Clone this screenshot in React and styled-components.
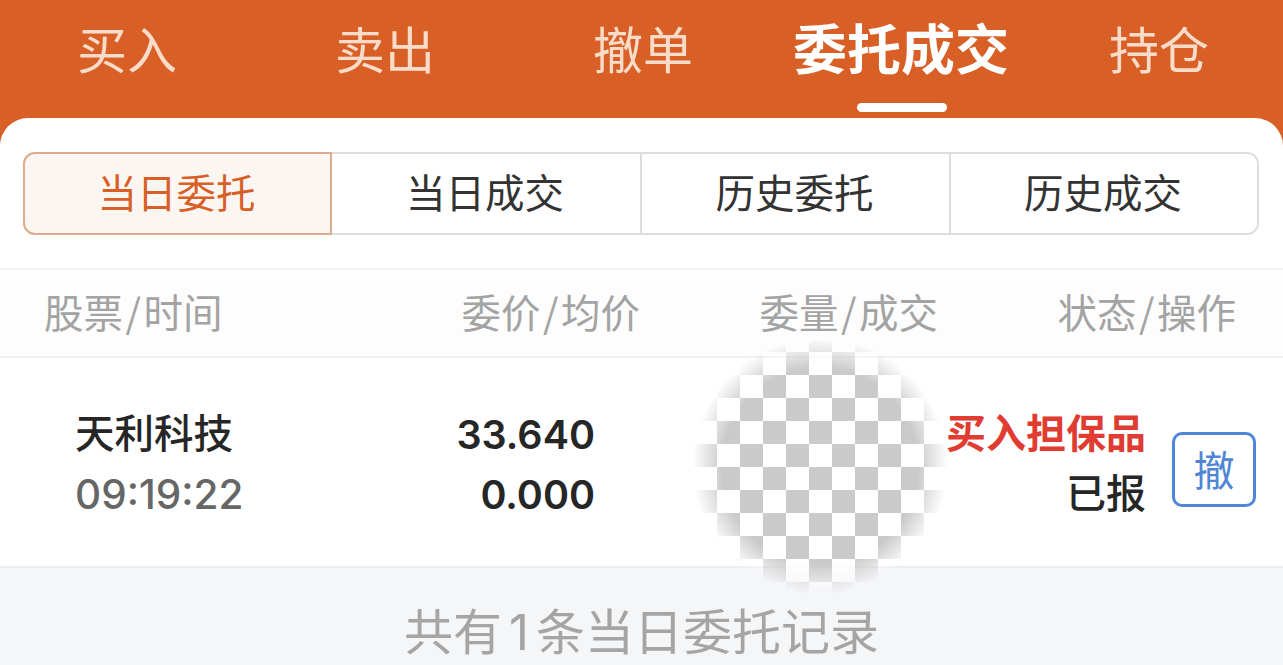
import React from 'react';
import styled, {createGlobalStyle} from 'styled-components';

const GlobalStyle = createGlobalStyle`
    html, body{
        margin: 0;
        padding: 0;
        background: #ffffff;
    }
    body{
        font-family: "Noto Sans CJK SC", "Liberation Sans", sans-serif;
        overflow: hidden;
    }
`;

const Page = styled.div`
    width: 1283px;
    height: 665px;
    overflow: hidden;
    background: #d86027;
`;

const TopTabs = styled.div`
    display: grid;
    grid-template-columns: repeat(5, 258px);
    margin-left: -2px;
    height: 118px;
`;

const TopTab = styled.div`
    position: relative;
    text-align: center;
    height: 100px;
    line-height: 94px;
    color: ${p => p.$active ? '#ffffff' : '#f8dcc9'};
    font-size: ${p => p.$active ? '54px' : '50px'};
    font-weight: ${p => p.$active ? 700 : 400};
    &::after{
        content: "";
        display: ${p => p.$active ? 'block' : 'none'};
        position: absolute;
        left: 85px;
        top: 103px;
        width: 90px;
        height: 9px;
        border-radius: 5px;
        background: #ffffff;
    }
`;

const Panel = styled.div`
    background: #ffffff;
    border-radius: 28px 28px 0 0;
    height: 547px;
    padding-top: 34px;
    box-sizing: border-box;
`;

const Segments = styled.div`
    display: grid;
    grid-template-columns: 307px 308px 309px 1fr;
    margin: 0 24px 0 23px;
    height: 83px;
    box-sizing: border-box;
    border: 2px solid #dddddd;
    border-radius: 12px;
`;

const Segment = styled.div`
    margin: ${p => p.$active ? '-2px 0 -2px -2px' : '0'};
    padding-right: 2px;
    text-align: center;
    line-height: 73px;
    font-size: 39.5px;
    color: ${p => p.$active ? '#d86027' : '#333333'};
    background: ${p => p.$active ? '#fcf6f2' : '#ffffff'};
    border: ${p => p.$active ? '2px solid #e0ab8d' : 'none'};
    border-left: ${p => p.$active || p.$first ? '' : '2px solid #dddddd'};
    border-radius: ${p => p.$active ? '12px 0 0 12px' : '0'};
    border-top-right-radius: ${p => p.$last ? '10px' : ''};
    border-bottom-right-radius: ${p => p.$last ? '10px' : ''};
`;

const Table = styled.div`
    position: relative;
    margin-top: 33px;
`;

const HeadRow = styled.div`
    display: grid;
    grid-template-columns: 178px 418px 298px 298px;
    padding-left: 44px;
    height: 90px;
    box-sizing: border-box;
    border-top: 2px solid #f2f2f2;
    border-bottom: 2px solid #f0f0f0;
    background: #fdfdfd;
`;

const HeadCell = styled.div`
    text-align: ${p => p.$left ? 'left' : 'right'};
    font-size: 39.5px;
    line-height: 81px;
    color: #a3a3a3;
    white-space: nowrap;
    span{
        margin: 0 2.5px;
    }
`;

const OrderRow = styled.div`
    display: flex;
    align-items: center;
    height: 210px;
    box-sizing: border-box;
    padding: 0 27px 0 75px;
    border-bottom: 2px solid #eeeeee;
`;

const NameCell = styled.div`
    width: 225px;
`;

const PriceCell = styled.div`
    width: 295px;
    text-align: right;
`;

const Line = styled.div`
    height: 60px;
    line-height: ${p => p.$num ? '66px' : '58px'};
    white-space: nowrap;
    font-size: ${p => p.$num ? p.$size || '40px' : p.$size || '40px'};
    font-family: ${p => p.$num ? 'Inter, "Liberation Sans", sans-serif' : 'inherit'};
    font-weight: ${p => p.$weight || 500};
    color: ${p => p.$color || '#262626'};
`;

const StatusCell = styled.div`
    flex: 1;
    text-align: right;
`;

const CancelButton = styled.div`
    width: 84px;
    height: 75px;
    margin: 15px 0 0 26px;
    box-sizing: border-box;
    border: 3px solid #4f86d6;
    border-radius: 10px;
    color: #4f86d6;
    font-size: 41px;
    line-height: 67px;
    text-align: center;
`;

const Mosaic = styled.div`
    position: absolute;
    left: 694px;
    top: 72px;
    width: 256px;
    height: 256px;
    background-color: #ffffff;
    background-image: repeating-conic-gradient(#cacaca 0 25%, #ffffff 0 50%);
    background-size: 46px 46px;
    background-position: 0px -11px;
    filter: blur(0.6px);
    -webkit-mask-image: radial-gradient(circle at 126px 126px, #000 0, #000 98px, transparent 128px);
    mask-image: radial-gradient(circle at 126px 126px, #000 0, #000 98px, transparent 128px);
`;

const Footer = styled.div`
    background: #f5f6f8;
    height: 97px;
    box-sizing: border-box;
    padding-top: 36px;
    text-align: center;
    font-family: Inter, "Noto Sans CJK SC", sans-serif;
    font-size: 49px;
    line-height: 58px;
    color: #a5a5a5;
`;

const Digit = styled.span`
    margin: 0 7px;
`;

const App = () => {
    return (
        <Page>
            <GlobalStyle />
            <TopTabs>
                <TopTab>买入</TopTab>
                <TopTab>卖出</TopTab>
                <TopTab>撤单</TopTab>
                <TopTab $active>委托成交</TopTab>
                <TopTab>持仓</TopTab>
            </TopTabs>
            <Panel>
                <Segments>
                    <Segment $active>当日委托</Segment>
                    <Segment $first>当日成交</Segment>
                    <Segment>历史委托</Segment>
                    <Segment $last>历史成交</Segment>
                </Segments>
                <Table>
                    <HeadRow>
                        <HeadCell $left>股票<span>/</span>时间</HeadCell>
                        <HeadCell>委价<span>/</span>均价</HeadCell>
                        <HeadCell>委量<span>/</span>成交</HeadCell>
                        <HeadCell>状态<span>/</span>操作</HeadCell>
                    </HeadRow>
                    <OrderRow>
                        <NameCell>
                            <Line $size="39.5px">天利科技</Line>
                            <Line $num $size="40.5px" $color="#666666">09:19:22</Line>
                        </NameCell>
                        <PriceCell>
                            <Line $num $size="39.5px" $weight={600}>33.640</Line>
                            <Line $num $size="39.5px" $weight={600}>0.000</Line>
                        </PriceCell>
                        <StatusCell>
                            <Line $color="#e03c31" $weight={700}>买入担保品</Line>
                            <Line>已报</Line>
                        </StatusCell>
                        <CancelButton>撤</CancelButton>
                    </OrderRow>
                    <Footer>共有<Digit>1</Digit>条当日委托记录</Footer>
                    <Mosaic />
                </Table>
            </Panel>
        </Page>
    )
}

export default App
